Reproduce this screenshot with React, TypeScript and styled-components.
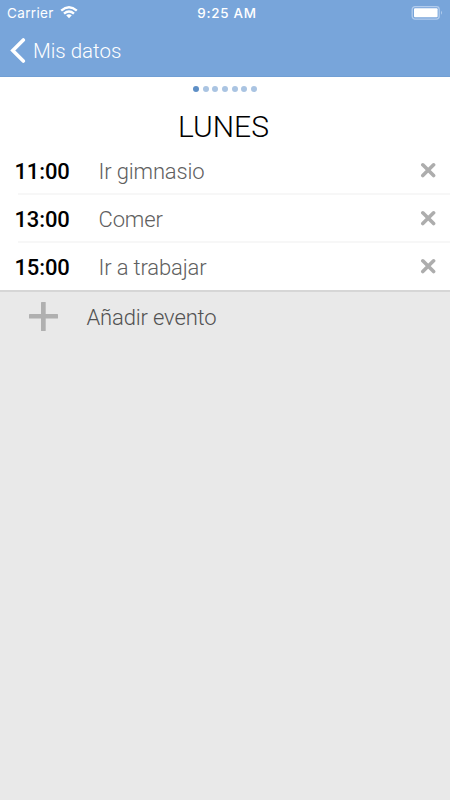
import React from 'react';
import styled, { createGlobalStyle } from 'styled-components';

const GlobalStyle = createGlobalStyle`
  * { box-sizing: border-box; }
  body { margin: 0; background: #e9e9e9; font-family: Roboto, sans-serif; }
`;

const Screen = styled.main`
  width: 450px;
  height: 800px;
  overflow: hidden;
  display: flex;
  flex-direction: column;
  background: #e9e9e9;
`;

const Header = styled.header`
  height: 77px;
  background: #78a5da;
  color: #fff;
  border-bottom: 1px solid #719fd4;
`;

const StatusBar = styled.div`
  height: 25px;
  display: grid;
  grid-template-columns: 1fr auto 1fr;
  align-items: center;
  padding: 0 7px;
  font-family: Inter, sans-serif;
`;

const Network = styled.div`
  display: flex;
  align-items: center;
  gap: 6px;
  font-size: 13.5px;
  letter-spacing: 0.35px;
`;

const Clock = styled.time`
  font-size: 13.4px;
  font-weight: 500;
  letter-spacing: 0.72px;
  padding-left: 4px;
`;

const Battery = styled.svg`
  justify-self: end;
`;

const BackButton = styled.button`
  height: 51px;
  display: flex;
  align-items: center;
  gap: 7px;
  padding: 0 0 0 10px;
  border: 0;
  background: none;
  color: inherit;
  font: 350 20.5px/51px Roboto, sans-serif;
  letter-spacing: 0;
`;

const BackLabel = styled.span`
  padding-top: 1px;
`;

const Day = styled.section`
  height: 213px;
  background: #fff;
`;

const Pager = styled.div`
  display: flex;
  justify-content: center;
  gap: 3.6px;
  padding-top: 9px;
`;

const Dot = styled.span<{ $active?: boolean }>`
  width: 6px;
  height: 6px;
  border-radius: 50%;
  background: ${({ $active }) => ($active ? '#5e8fc6' : '#aac4e2')};
`;

const Title = styled.h1`
  margin: 14px 0 0;
  padding-right: 3px;
  text-align: center;
  color: #000;
  font-size: 30px;
  font-weight: 300;
  line-height: 41px;
`;

const Events = styled.ul`
  list-style: none;
  margin: 0;
  padding: 0;
`;

const EventRow = styled.li`
  height: 48px;
  display: grid;
  grid-template-columns: 80px 1fr 16px;
  align-items: center;
  margin-left: 18px;
  padding: 0 14px 0 0;
  border-bottom: 2px solid #f7f7f7;
  &:last-child { border-bottom-color: transparent; }
`;

const Hour = styled.span`
  margin-left: -3.6px;
  padding-top: 3px;
  color: #000;
  font-size: 22px;
  font-weight: 500;
  letter-spacing: -0.1px;
`;

const EventName = styled.span`
  padding: 3px 0 0 0.5px;
  color: #606060;
  font-size: 22px;
  font-weight: 300;
  letter-spacing: -0.15px;
`;

const RemoveButton = styled.button`
  display: flex;
  padding: 0;
  border: 0;
  background: none;
`;

const AddButton = styled.button`
  height: 52px;
  display: flex;
  align-items: center;
  gap: 28.5px;
  padding: 0 0 0 28px;
  border: 0;
  border-top: 2px solid #d6d6d6;
  background: none;
  color: #525252;
  font: 300 22px Roboto, sans-serif;
  letter-spacing: -0.15px;
`;

const events = [
  { hour: '11:00', name: 'Ir gimnasio' },
  { hour: '13:00', name: 'Comer' },
  { hour: '15:00', name: 'Ir a trabajar' },
];

export default function App() {
  return (
    <Screen>
      <GlobalStyle />
      <Header>
        <StatusBar>
          <Network>
            <span>Carrier</span>
            <svg width="18" height="13" viewBox="0 0 18 13" fill="none" stroke="#fff" strokeWidth="2.4">
              <path d="M1.2 4.7Q9-2 16.8 4.7M4 7.7Q9 3.4 14 7.7" />
              <path d="M6.2 9.3Q9 7.1 11.8 9.3L9 12.2Z" fill="#fff" stroke="none" />
            </svg>
          </Network>
          <Clock>9:25 AM</Clock>
          <Battery width="32" height="14" viewBox="0 0 32 14">
            <rect x="1.2" y=".7" width="27" height="12.4" rx="2.8" fill="none" stroke="#b2cced" strokeWidth="1.3" />
            <rect x="3" y="2.3" width="23.6" height="9" rx="1" fill="#fff" />
            <path d="M30 4.7Q32 6.7 30 8.7Z" fill="#b2cced" />
          </Battery>
        </StatusBar>
        <BackButton>
          <svg width="16" height="26" viewBox="0 0 16 26" fill="none" stroke="#fff" strokeWidth="3.6" strokeLinecap="round">
            <path d="M13.3 2L2.8 12.5L13.3 23" />
          </svg>
          <BackLabel>Mis datos</BackLabel>
        </BackButton>
      </Header>
      <Day>
        <Pager>
          {[0, 1, 2, 3, 4, 5, 6].map((day) => (
            <Dot key={day} $active={day === 0} />
          ))}
        </Pager>
        <Title>LUNES</Title>
        <Events>
          {events.map((event) => (
            <EventRow key={event.hour}>
              <Hour>{event.hour}</Hour>
              <EventName>{event.name}</EventName>
              <RemoveButton aria-label="Eliminar">
                <svg width="16" height="16" viewBox="0 0 16 16" stroke="#adadad" strokeWidth="3.6" strokeLinecap="round">
                  <path d="M2.8 2.8L13.6 13.6M13.6 2.8L2.8 13.6" />
                </svg>
              </RemoveButton>
            </EventRow>
          ))}
        </Events>
      </Day>
      <AddButton>
        <svg width="30" height="30" viewBox="0 0 30 30" fill="#b0b0b0">
          <rect x="1" y="12" width="29" height="4.5" rx=".6" />
          <rect x="13" y="0" width="4.7" height="29" rx=".6" />
        </svg>
        Añadir evento
      </AddButton>
    </Screen>
  );
}
